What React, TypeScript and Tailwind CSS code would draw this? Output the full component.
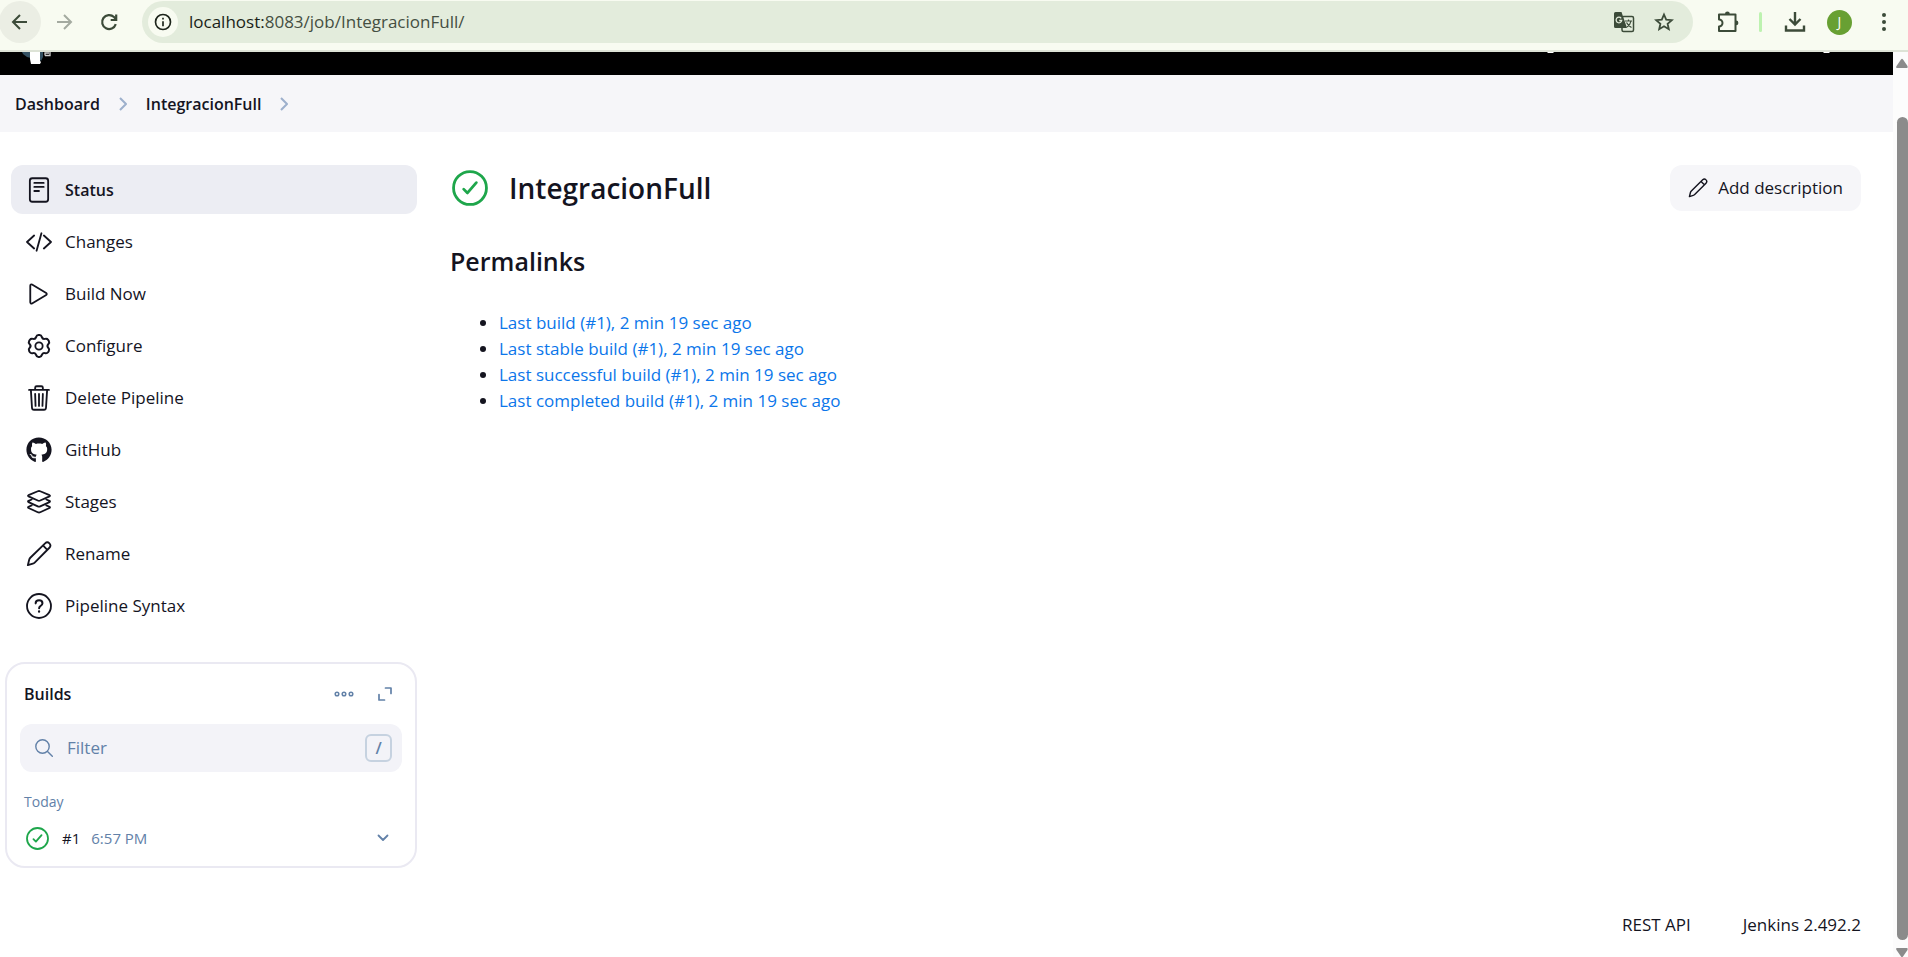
import React from "react";
import { FaGithub } from "react-icons/fa";

type IconProps = { className?: string };

const stroke36 = {
  fill: "none",
  stroke: "currentColor",
  strokeWidth: 36,
  strokeLinecap: "round" as const,
  strokeLinejoin: "round" as const,
};

function Icon({ className = "size-[26px]", children }: IconProps & { children: React.ReactNode }) {
  return (
    <svg viewBox="0 0 512 512" className={`shrink-0 ${className}`} aria-hidden="true">
      <g {...stroke36}>{children}</g>
    </svg>
  );
}

function StatusIcon() {
  return (
    <Icon>
      <rect x="76" y="24" width="360" height="464" rx="48" />
      <path d="M164 116h184M164 196h184M164 276h92" />
    </Icon>
  );
}

function ChangesIcon() {
  return (
    <Icon>
      <path d="M160 128L20 256l140 128M352 128l140 128-140 128M304 84L208 428" />
    </Icon>
  );
}

function PlayIcon() {
  return (
    <Icon>
      <path d="M84 93v326c0 20 19 32 35 23l279-167c14-8 14-30 0-38L119 70c-16-9-35 3-35 23z" />
    </Icon>
  );
}

function GearIcon() {
  return (
    <Icon>
      <circle cx="256" cy="256" r="72" />
      <path d="M204 62C212 34 226 24 246 24h20c20 0 34 10 42 38 8 26 28 38 54 32 30-8 44-2 56 16l14 24c12 20 10 38-10 58-20 20-20 44 0 64 20 20 22 38 10 58l-14 24c-12 18-26 24-56 16-26-6-46 6-54 32-8 28-22 38-42 38h-20c-20 0-34-10-42-38-8-26-28-38-54-32-30 8-44 2-56-16l-14-24c-12-20-10-38 10-58 20-20 20-44 0-64-20-20-22-38-10-58l14-24c12-18 26-24 56-16 26 6 46-6 54-32z" transform="translate(-26 14) scale(1.1 1.08)" />
    </Icon>
  );
}

function TrashIcon() {
  return (
    <Icon>
      <path d="M96 96l22 352c1 22 17 40 40 40h196c23 0 38-18 40-40l22-352M60 96h392M180 96V54c0-17 13-30 30-30h92c17 0 30 13 30 30v42M256 176v236M180 176l8 236M332 176l-8 236" />
    </Icon>
  );
}

function LayersIcon() {
  return (
    <Icon>
      <path d="M462 122L280 44c-16-6-32-6-48 0L50 122c-14 7-14 16 0 23l182 82c16 7 32 7 48 0l182-82c14-7 14-16 0-23z" />
      <path d="M112 206l-62 28c-14 7-14 17 0 24l182 84c16 7 32 7 48 0l182-84c14-7 14-17 0-24l-62-28" />
      <path d="M112 322l-62 28c-14 7-14 17 0 24l182 84c16 7 32 7 48 0l182-84c14-7 14-17 0-24l-62-28" />
    </Icon>
  );
}

function PencilIcon({ className }: IconProps) {
  return (
    <Icon className={className}>
      <path d="M36 476l28-110c4-14 11-26 21-36L376 47c24-23 62-23 85 1s23 61 0 85L171 424c-10 10-22 17-36 21zM334 88l86 86" />
    </Icon>
  );
}

function HelpIcon() {
  return (
    <Icon>
      <circle cx="256" cy="256" r="236" />
      <path d="M190 204c0-40 30-62 68-62s66 24 66 58c0 54-66 50-66 102" strokeWidth={40} />
      <circle cx="257" cy="364" r="12" fill="currentColor" strokeWidth={22} />
    </Icon>
  );
}

function SuccessIcon({ className }: IconProps) {
  return (
    <Icon className={className}>
      <circle cx="256" cy="256" r="234" strokeWidth={40} />
      <path d="M346 180L220 326l-54-54" strokeWidth={40} />
    </Icon>
  );
}

const tasks = [
  { label: "Status", icon: <StatusIcon />, active: true },
  { label: "Changes", icon: <ChangesIcon /> },
  { label: "Build Now", icon: <PlayIcon /> },
  { label: "Configure", icon: <GearIcon /> },
  { label: "Delete Pipeline", icon: <TrashIcon /> },
  { label: "GitHub", icon: <FaGithub className="size-[26px] shrink-0" /> },
  { label: "Stages", icon: <LayersIcon /> },
  { label: "Rename", icon: <PencilIcon /> },
  { label: "Pipeline Syntax", icon: <HelpIcon /> },
];

const permalinks = ["Last build", "Last stable build", "Last successful build", "Last completed build"];

function BrowserBar() {
  return (
    <header className="flex h-[52px] shrink-0 items-start border-b-2 border-[#dde3d6] bg-[#f8fbf1] text-[#3c4b39]">
      <div className="flex h-11 w-full items-center">
        <button aria-label="Back" className="-ml-px flex size-[42px] items-center justify-center rounded-full bg-[#ebeee4]">
          <svg viewBox="0 0 24 24" className="size-6" fill="none" stroke="currentColor" strokeWidth="2">
            <path d="M19 12H5.500M12 5l-7 7 7 7" />
          </svg>
        </button>
        <button aria-label="Forward" className="ml-[11px] flex size-6 items-center justify-center text-[#a4aaa0]">
          <svg viewBox="0 0 24 24" className="size-6" fill="none" stroke="currentColor" strokeWidth="2">
            <path d="M5 12h13.500M12 5l7 7-7 7" />
          </svg>
        </button>
        <button aria-label="Reload" className="ml-[21px] flex size-6 items-center justify-center">
          <svg viewBox="0 0 24 24" className="size-6" fill="none" stroke="currentColor" strokeWidth="2.200">
            <path d="M18.800 14.200A7 7 0 1 1 17 7l2 2.300" />
            <path d="M19.200 4.500v5.500h-5.500" />
          </svg>
        </button>
        <div className="ml-[21px] flex h-[42px] grow items-center rounded-full bg-[#e3ecdc] pl-1.5 pr-[18px]">
          <button aria-label="View site information" className="flex size-[30px] items-center justify-center rounded-full bg-[#f8fbf1] text-[#1d241b]">
            <svg viewBox="0 0 24 24" className="size-5" fill="none" stroke="currentColor" strokeWidth="2">
              <circle cx="12" cy="12" r="9" />
              <path d="M12 11v6M12 7v2" />
            </svg>
          </button>
          <div className="ml-[11px] text-[17px] text-[#454f42]">
            <span className="text-[#1a1f18]">localhost:</span>8083/job/IntegracionFull/
          </div>
          <button aria-label="Translate" className="ml-auto">
            <svg viewBox="0 0 22 22" className="size-[22px]">
              <rect x="9" y="5.500" width="11.500" height="15" rx="1.500" fill="none" stroke="currentColor" strokeWidth="1.500" />
              <path d="M2.500 1h6l5.500 16H2.500A1.500 1.500 0 0 1 1 15.500v-13A1.500 1.500 0 0 1 2.500 1z" fill="currentColor" />
              <path d="M8.200 7.300A2.800 2.800 0 1 0 8.700 9.500H6.200" fill="none" stroke="#e3ecdc" strokeWidth="1.300" />
              <path d="M12 10h7M15.500 8.500V10M18 10c-.5 3-2.500 5-4 6M13.500 11.500c1 2 3 4 5 5" fill="none" stroke="currentColor" strokeWidth="1.200" />
            </svg>
          </button>
          <button aria-label="Bookmark this tab" className="ml-[18px]">
            <svg viewBox="0 0 22 22" className="size-[22px]" fill="none" stroke="currentColor" strokeWidth="1.800">
              <path d="M11 3.500l2.200 5.100 5.600.5-4.200 3.700 1.200 5.400-4.800-2.900-4.800 2.900 1.200-5.400-4.200-3.700 5.600-.5z" />
            </svg>
          </button>
        </div>
        <button aria-label="Extensions" className="ml-6">
          <svg viewBox="0 0 22 22" className="size-[22px]" fill="none" stroke="currentColor" strokeWidth="2" strokeLinejoin="round">
            <path d="M2 3.500H18.500V20H2V15.500a3.500 3.500 0 0 0 0-7z" />
            <path d="M8 3a2.400 2.400 0 0 1 4.800 0zM19 9.500a2.400 2.400 0 0 1 0 4.800z" fill="currentColor" stroke="none" />
          </svg>
        </button>
        <div className="ml-5 h-5 w-[3px] rounded-full bg-[#bdf2b0]" />
        <button aria-label="Downloads" className="ml-[21px]">
          <svg viewBox="0 0 24 24" className="size-6" fill="none" stroke="currentColor" strokeWidth="2.400">
            <path d="M12 2v12M6.500 9l5.500 5.500L17.500 9M3 15.500V20.500h18V15.500" />
          </svg>
        </button>
        <button aria-label="Profile" className="ml-5 flex size-[25px] items-center justify-center rounded-full bg-[#68a033] text-sm text-white">
          J
        </button>
        <button aria-label="Browser menu" className="ml-5 mr-3">
          <svg viewBox="0 0 24 24" className="size-6" fill="currentColor">
            <circle cx="12" cy="5" r="2" />
            <circle cx="12" cy="12" r="2" />
            <circle cx="12" cy="19" r="2" />
          </svg>
        </button>
      </div>
    </header>
  );
}

function Sidebar() {
  return (
    <aside className="w-[417px] shrink-0 pt-[33px]">
      <nav className="flex flex-col gap-[3px] pl-[11px]">
        {tasks.map((t) => (
          <a
            key={t.label}
            href="#"
            aria-current={t.active ? "page" : undefined}
            className={
              t.active
                ? "flex h-[49px] items-center gap-[13px] rounded-xl bg-[#ecedf3] pl-[15px] text-base font-semibold"
                : "flex h-[49px] items-center gap-[13px] rounded-xl pl-[15px]"
            }
          >
            {t.icon}
            {t.label}
          </a>
        ))}
      </nav>
      <section className="ml-[5px] mt-8 rounded-[20px] border-2 border-[#eae9f2] px-[13px] pb-[15px] pt-3">
        <div className="flex h-9 items-center pl-1 pr-[9px] text-[#6281a8]">
          <h2 className="text-base font-semibold text-[#14141f]">Builds</h2>
          <button aria-label="More options" className="ml-auto">
            <svg viewBox="0 0 20 6" className="h-1.5 w-5" fill="none" stroke="currentColor" strokeWidth="1.500">
              <circle cx="3" cy="3" r="1.800" />
              <circle cx="10" cy="3" r="1.800" />
              <circle cx="17" cy="3" r="1.800" />
            </svg>
          </button>
          <button aria-label="Expand" className="ml-[23px]">
            <svg viewBox="0 0 16 16" className="size-4" fill="none" stroke="currentColor" strokeWidth="1.700" strokeLinecap="round" strokeLinejoin="round">
              <path d="M8.500 2H14v5.500M2 8.500V14h5.500" />
            </svg>
          </button>
        </div>
        <label className="mt-3 flex h-12 items-center rounded-xl bg-[#f3f3f8] pl-[15px] pr-2.5 text-[#6281a8]">
          <svg viewBox="0 0 18 18" className="size-[18px] shrink-0" fill="none" stroke="currentColor" strokeWidth="1.400" strokeLinecap="round">
            <circle cx="7.500" cy="7.500" r="6.700" />
            <path d="M12.500 12.500L17.300 17.300" />
          </svg>
          <input aria-label="Filter builds" placeholder="Filter" className="ml-3.5 min-w-0 grow bg-transparent outline-none placeholder:text-[#6281a8]" />
          <kbd className="flex h-7 w-[27px] items-center justify-center rounded-md border-2 border-[#c6d2e0] font-['Open_Sans',sans-serif] text-base font-semibold">/</kbd>
        </label>
        <p className="mt-[19px] pl-1 text-sm leading-[22px] text-[#6281a8]">Today</p>
        <div className="mt-3 flex h-[26px] items-center pl-1.5 pr-[13px] text-[15px]">
          <SuccessIcon className="size-[23px] text-[#1ea64b]" />
          <a href="#" className="ml-[13px]">#1</a>
          <a href="#" className="ml-[11px] text-[#6281a8]">6:57 PM</a>
          <button aria-label="Build details" className="ml-auto text-[#6281a8]">
            <svg viewBox="0 0 12 8" className="h-2 w-3" fill="none" stroke="currentColor" strokeWidth="1.800" strokeLinecap="round" strokeLinejoin="round">
              <path d="M1.500 1.500L6 6l4.500-4.500" />
            </svg>
          </button>
        </div>
      </section>
    </aside>
  );
}

function Chevron() {
  return (
    <svg viewBox="0 0 8 14" className="h-3.5 w-2" fill="none" stroke="#9db0cc" strokeWidth="2" strokeLinejoin="round">
      <path d="M1 1l6 6-6 6" />
    </svg>
  );
}

export default function App() {
  return (
    <div className="flex h-screen flex-col overflow-hidden bg-white font-['Open_Sans','Noto_Sans',sans-serif] text-[17px] leading-[26px] text-[#14141f]">
      <BrowserBar />
      <div className="flex min-h-0 grow">
        <div className="flex min-w-0 grow flex-col">
          <div className="flex h-[23px] shrink-0 items-start justify-between bg-black pl-[22px]">
            <svg viewBox="0 0 30 13" className="h-[13px] w-[30px]">
              <path d="M0 0h9v6l-4-1-4-3z" fill="#335061" />
              <path d="M17 0h4v5l-2 4-2-2z" fill="#335061" />
              <path d="M8 0h10v9l1 1-1 2H9L8 7z" fill="#fff" />
              <path d="M23 3.500V1h4M23 3.500h5V0" stroke="#cfcfcf" strokeWidth="1.300" fill="none" />
            </svg>
            <svg viewBox="0 0 290 2" className="mr-[60px] h-0.5 w-[290px]" fill="#fff">
              <path d="M4 0h7l-1 1H5zM280 0h7l-1 1h-5z" />
            </svg>
          </div>
          <nav aria-label="Breadcrumb" className="flex h-[57px] shrink-0 items-center bg-[#f6f6f9] pl-[15px] text-base font-semibold">
            <a href="#">Dashboard</a>
            <span className="mx-[19px]"><Chevron /></span>
            <a href="#">IntegracionFull</a>
            <span className="mx-[19px]"><Chevron /></span>
          </nav>
          <div className="flex min-h-0 grow">
            <Sidebar />
            <div className="flex min-w-0 grow flex-col pl-[33px] pr-8 pt-[33px]">
              <main className="grow">
                <div className="flex items-center">
                  <SuccessIcon className="ml-0.5 size-9 text-[#1ea64b]" />
                  <h1 className="ml-[21px] text-[28px] font-semibold leading-[46px]">IntegracionFull</h1>
                  <button className="ml-auto flex h-[46px] items-center gap-2.5 rounded-xl bg-[#f6f6f9] px-[18px]">
                    <PencilIcon className="size-5" />
                    Add description
                  </button>
                </div>
                <h2 className="mt-8 text-[25px] font-semibold leading-9">Permalinks</h2>
                <ul className="mt-[31px] list-disc pl-[49px]">
                  {permalinks.map((p) => (
                    <li key={p}>
                      <a href="#" className="text-[#0b76ea]">{p} (#1), 2 min 19 sec ago</a>
                    </li>
                  ))}
                </ul>
              </main>
              <footer className="flex justify-end gap-[52px] pb-[19px]">
                <a href="#">REST API</a>
                <button>Jenkins 2.492.2</button>
              </footer>
            </div>
          </div>
        </div>
        <div className="flex w-[15px] shrink-0 flex-col items-end bg-[#fcfcfc] pt-1.5" aria-hidden="true">
          <svg viewBox="0 0 12 10" className="h-2.5 w-3" fill="#8b8b8b">
            <path d="M5 1.500Q6 0 7 1.500L11.500 8Q12 10 11 10H1Q-.5 10 .5 8z" />
          </svg>
          <div className="mt-[49px] w-[11px] grow rounded-full bg-[#8b8b8b]" />
          <svg viewBox="0 0 12 10" className="mb-[-1px] mt-2 h-2.5 w-3" fill="#8b8b8b">
            <path d="M5 8.500Q6 10 7 8.500L11.500 2Q12 0 11 0H1Q-.5 0 .5 2z" />
          </svg>
        </div>
      </div>
    </div>
  );
}
